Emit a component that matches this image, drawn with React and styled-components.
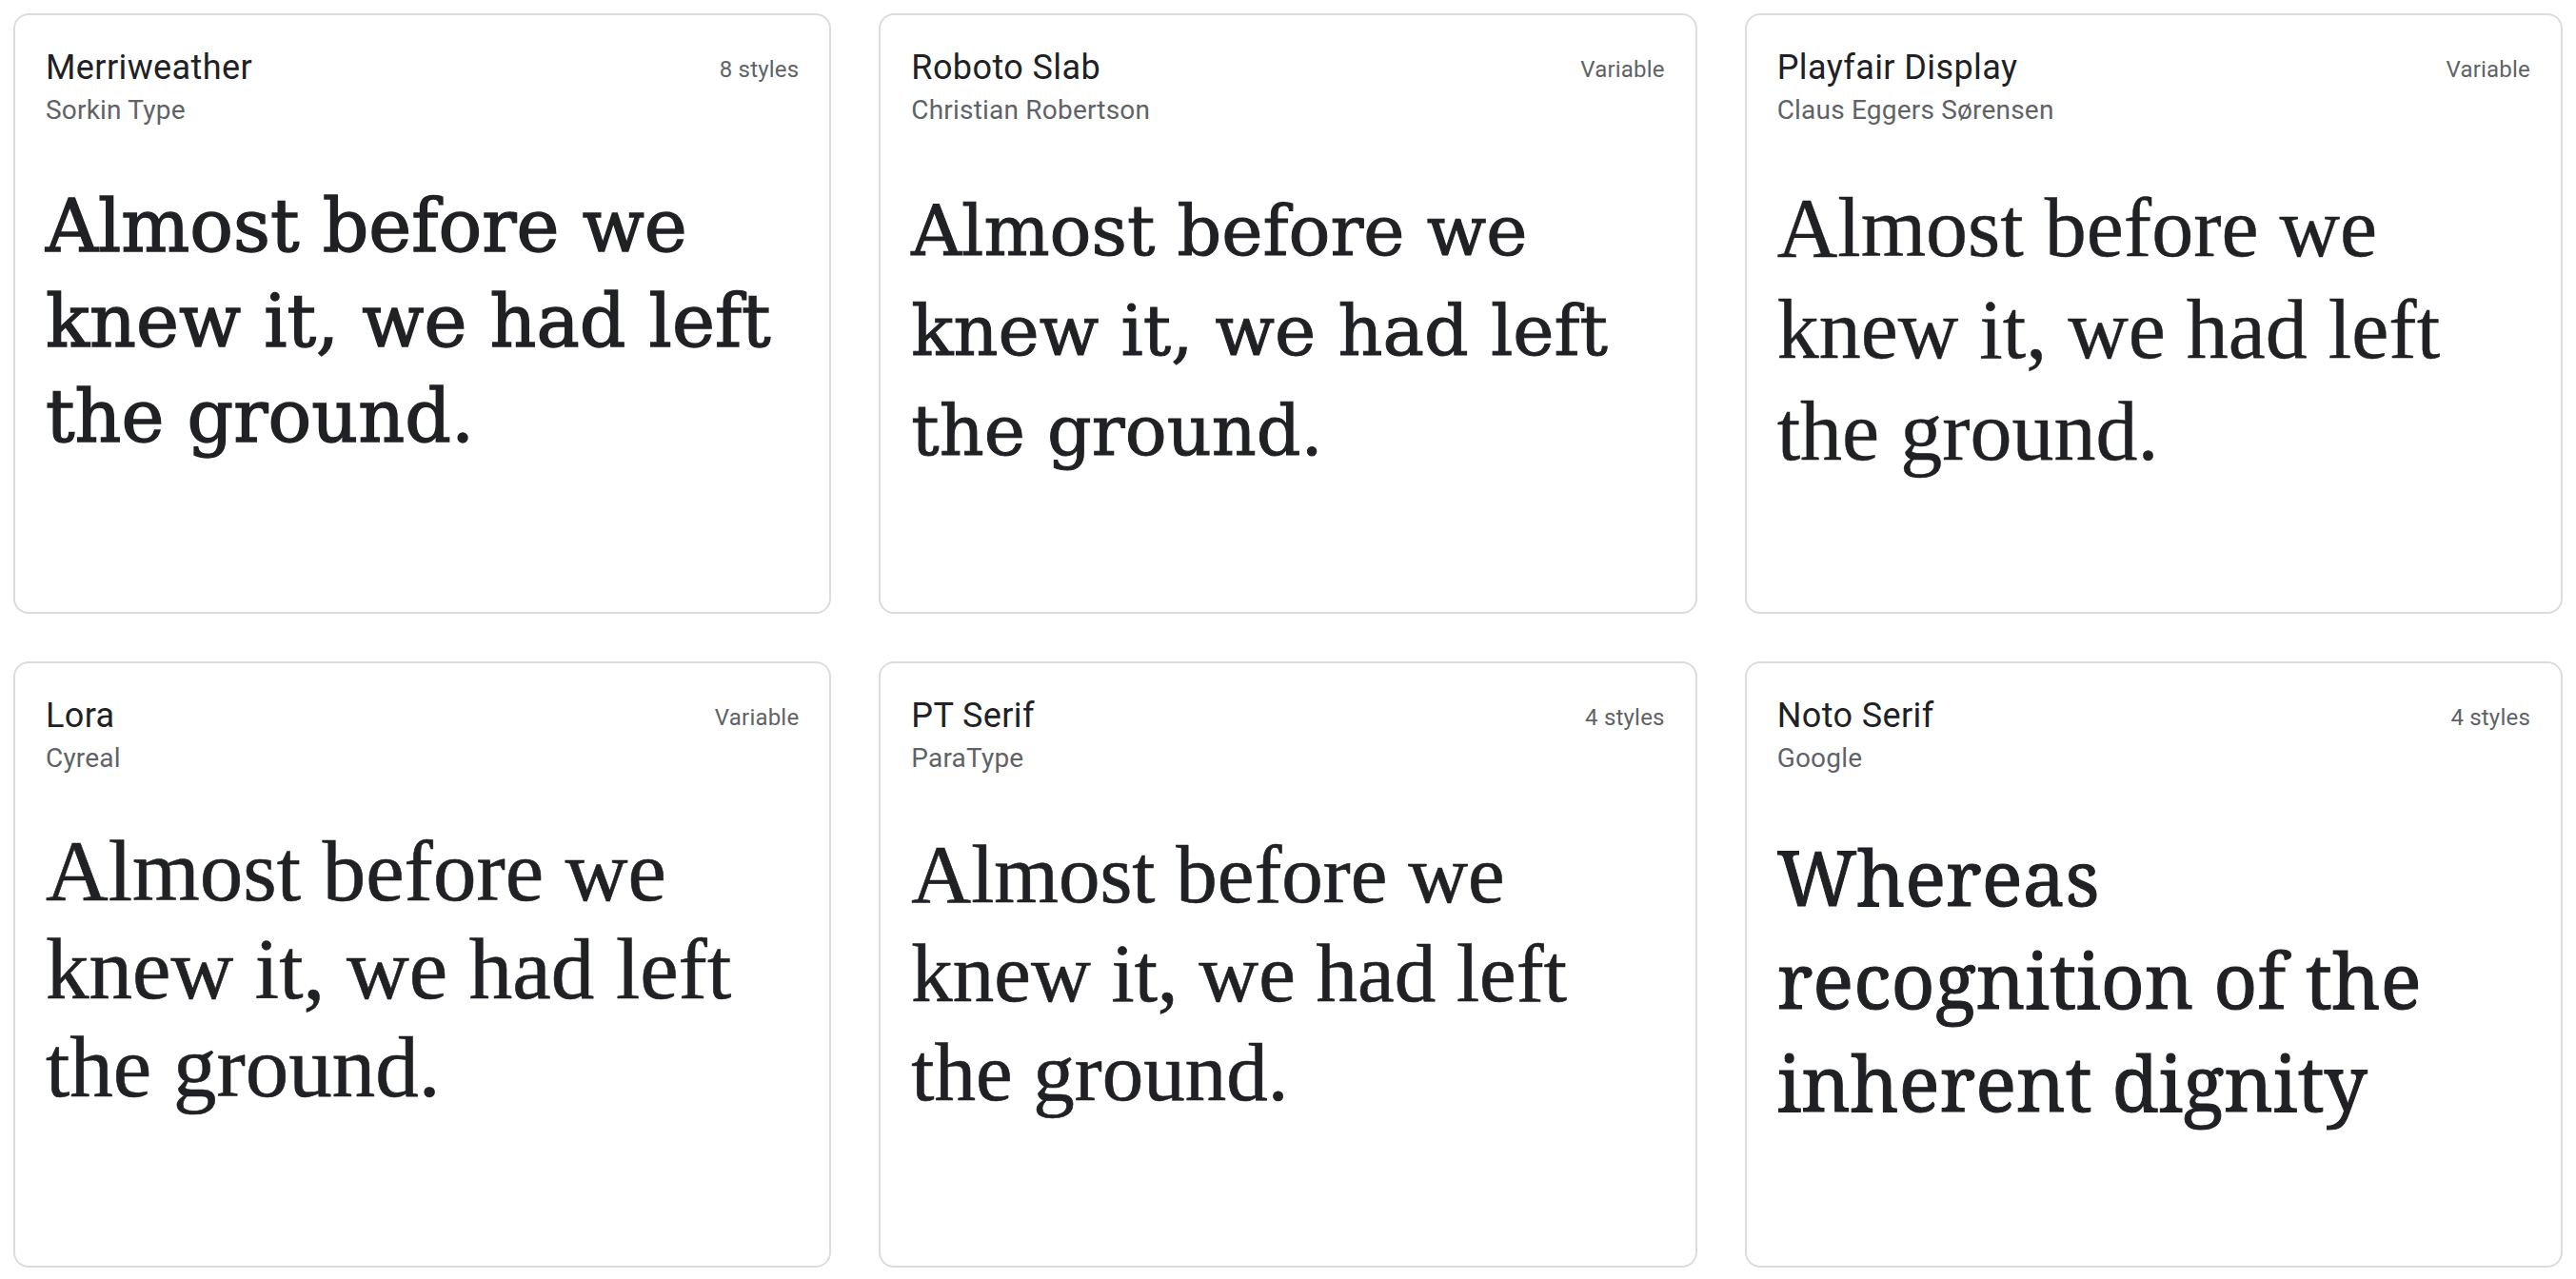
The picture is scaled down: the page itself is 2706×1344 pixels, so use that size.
import React from "react";
import styled, { createGlobalStyle } from "styled-components";

const GlobalStyle = createGlobalStyle`
  html, body {
    margin: 0;
    padding: 0;
    background: #ffffff;
  }
  * {
    box-sizing: border-box;
  }
`;

const Grid = styled.div`
  display: grid;
  grid-template-columns: repeat(3, 1fr);
  grid-template-rows: 631px 637px;
  column-gap: 50px;
  row-gap: 50px;
  padding: 14px;
  font-family: Roboto, "Liberation Sans", sans-serif;
`;

const Card = styled.div`
  border: 2px solid #dadce0;
  border-radius: 16px;
  padding: 35px 32px 0 32px;
  overflow: hidden;
  background: #ffffff;
`;

const CardHeader = styled.div`
  display: flex;
  justify-content: space-between;
  align-items: flex-start;
`;

const Names = styled.div`
  display: flex;
  flex-direction: column;
`;

const FontName = styled.div`
  font-size: 36px;
  line-height: 40px;
  color: #202124;
  letter-spacing: 0.4px;
`;

const Designer = styled.div`
  margin-top: 9px;
  font-size: 28px;
  line-height: 32px;
  color: #5f6368;
  letter-spacing: 0.2px;
`;

const Styles = styled.div`
  margin-top: 2px;
  font-size: 24px;
  line-height: 40px;
  color: #5f6368;
  letter-spacing: 0.2px;
`;

const Sample = styled.div`
  margin-top: ${(p) => p.$offset}px;
  font-family: ${(p) => p.$family};
  font-size: ${(p) => p.$size}px;
  line-height: ${(p) => p.$lh}px;
  color: #202124;
  -webkit-text-stroke: ${(p) => p.$stroke}px #202124;
`;

const Line = styled.span`
  display: block;
  white-space: nowrap;
`;

const SLAB = `"DejaVu Serif", serif`;
const TIMES = `"Liberation Serif", "Times New Roman", serif`;
const NOTO = `"Noto Serif", "DejaVu Serif", serif`;

const ground = ["Almost before we", "knew it, we had left", "the ground."];

const fonts = [
  { name: "Merriweather", designer: "Sorkin Type", styles: "8 styles", family: SLAB, size: 76, lh: 100, offset: 56, stroke: 1.4, lines: ground },
  { name: "Roboto Slab", designer: "Christian Robertson", styles: "Variable", family: SLAB, size: 73, lh: 105, offset: 58, stroke: 1, lines: ground },
  { name: "Playfair Display", designer: "Claus Eggers Sørensen", styles: "Variable", family: TIMES, size: 88, lh: 107, offset: 54, stroke: 0.4, lines: ground },
  { name: "Lora", designer: "Cyreal", styles: "Variable", family: TIMES, size: 91, lh: 103, offset: 51, stroke: 0.6, lines: ground },
  { name: "PT Serif", designer: "ParaType", styles: "4 styles", family: TIMES, size: 87, lh: 104, offset: 54, stroke: 0.6, lines: ground },
  { name: "Noto Serif", designer: "Google", styles: "4 styles", family: NOTO, size: 80, lh: 108, offset: 54, stroke: 1, lines: ["Whereas", "recognition of the", "inherent dignity"] },
];

const FontCard = ({ font }) => (
  <Card>
    <CardHeader>
      <Names>
        <FontName>{font.name}</FontName>
        <Designer>{font.designer}</Designer>
      </Names>
      <Styles>{font.styles}</Styles>
    </CardHeader>
    <Sample
      $family={font.family}
      $size={font.size}
      $lh={font.lh}
      $offset={font.offset}
      $stroke={font.stroke}
    >
      {font.lines.map((l) => (
        <Line key={l}>{l}</Line>
      ))}
    </Sample>
  </Card>
);

const App = () => (
  <>
    <GlobalStyle />
    <Grid>
      {fonts.map((f) => (
        <FontCard key={f.name} font={f} />
      ))}
    </Grid>
  </>
);

export default App;
